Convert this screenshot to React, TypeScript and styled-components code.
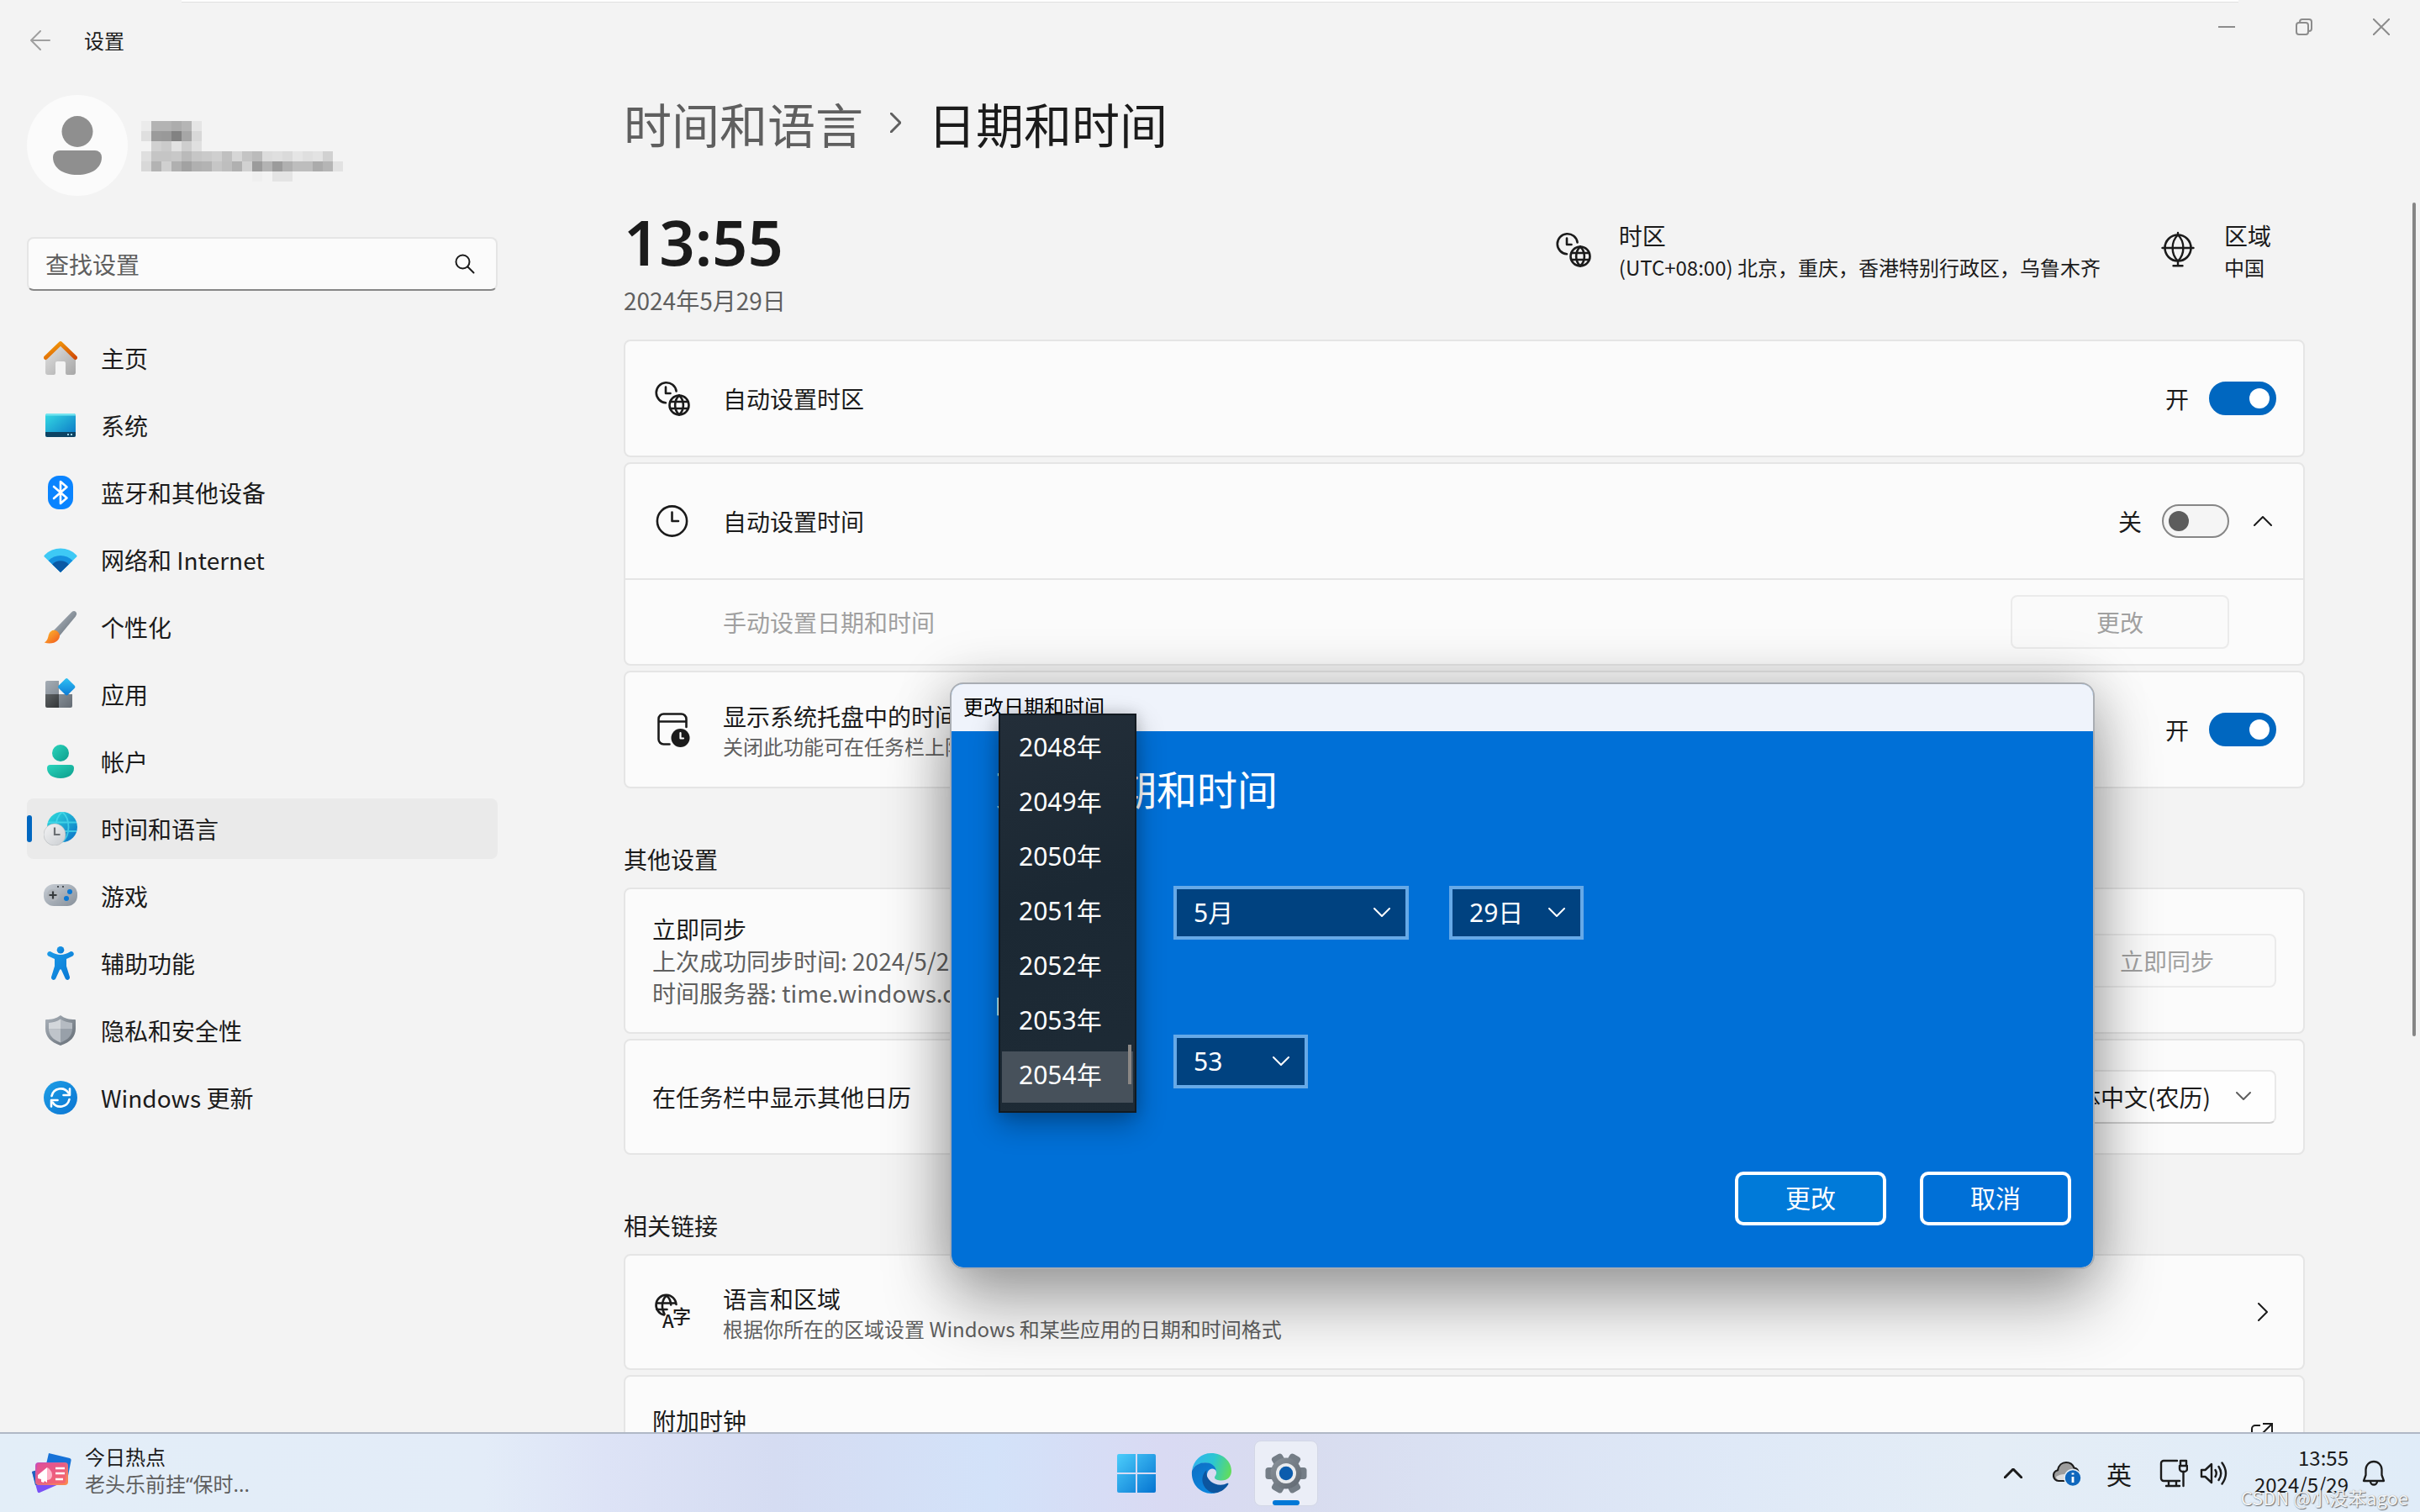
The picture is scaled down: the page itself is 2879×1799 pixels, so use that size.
import React from 'react';
import styled, { createGlobalStyle, css } from 'styled-components';

const GlobalStyle = createGlobalStyle`
  *, *::before, *::after { box-sizing: border-box; }
  body {
    margin: 0;
    background: #f3f3f3;
    color: #1b1b1b;
    font-family: "Noto Sans CJK SC", "Noto Sans", sans-serif;
    font-size: 28px;
    line-height: 40px;
  }
  h1, h2, h3, p, ul { margin: 0; padding: 0; font-weight: 400; }
  ul { list-style: none; }
  button, input, select { font: inherit; color: inherit; }
  a { color: inherit; text-decoration: none; }
  svg { display: block; flex: none; }
`;

/* ---------- shell ---------- */

const Desktop = styled.div`
  position: relative;
  height: 100vh;
  display: flex;
  flex-direction: column;
  overflow: hidden;
`;

const SettingsWindow = styled.div`
  flex: 1;
  min-height: 0;
  display: flex;
  flex-direction: column;
`;

const BackWindowEdge = styled.div`
  position: absolute;
  top: 0;
  left: 216px;
  right: 216px;
  height: 3px;
  background: #ffffff;
  border-bottom: 1px solid #e0e0e0;
`;

const TitleBar = styled.header`
  height: 96px;
  flex: none;
  display: flex;
  align-items: center;
  padding-left: 36px;
`;

const BackButton = styled.button`
  border: 0;
  padding: 0;
  background: none;
  color: #a0a0a0;
  margin-right: 40px;
`;

const WindowTitle = styled.span`
  font-size: 24px;
  line-height: 32px;
`;

const WindowControls = styled.div`
  margin-left: auto;
  align-self: flex-start;
  display: flex;
`;

const WindowControl = styled.button`
  width: 92px;
  height: 64px;
  border: 0;
  padding: 0;
  background: none;
  color: #8c8c8c;
  display: grid;
  place-items: center;
`;

const Body = styled.div`
  flex: 1;
  min-height: 0;
  display: flex;
`;

/* ---------- sidebar ---------- */

const Sidebar = styled.aside`
  width: 592px;
  flex: none;
  padding: 17px 0 0 32px;
`;

const Profile = styled.div`
  display: flex;
  gap: 16px;
  height: 120px;
`;

const Avatar = styled.div`
  width: 120px;
  height: 120px;
  border-radius: 50%;
  background: #fbfbfb;
  display: grid;
  place-items: center;
`;

const MaskedName = styled.svg`
  margin-top: 31px;
`;

const SearchBox = styled.label`
  margin-top: 49px;
  height: 64px;
  display: flex;
  align-items: center;
  padding: 0 25px 0 20px;
  background: #fbfbfb;
  border: 2px solid #e5e5e5;
  border-bottom-color: #868686;
  border-radius: 8px;
`;

const SearchInput = styled.input`
  flex: 1;
  min-width: 0;
  border: 0;
  padding: 0;
  outline: 0;
  background: none;
  height: 56px;
  &::placeholder { color: #5f5f5f; opacity: 1; }
`;

const NavList = styled.ul`
  margin-top: 44px;
  display: flex;
  flex-direction: column;
  gap: 8px;
`;

const NavLink = styled.a<{ $active?: boolean }>`
  position: relative;
  height: 72px;
  display: flex;
  align-items: center;
  gap: 28px;
  padding-left: 20px;
  border-radius: 8px;
  background: ${p => (p.$active ? '#eaeaea' : 'transparent')};
  ${p => p.$active && css`
    &::before {
      content: "";
      position: absolute;
      left: 0;
      top: 20px;
      width: 6px;
      height: 32px;
      border-radius: 3px;
      background: #0067c0;
    }
  `}
`;

/* ---------- main column ---------- */

const Main = styled.main`
  position: relative;
  flex: 1;
  min-width: 0;
  overflow: hidden;
  padding: 14px 137px 0 150px;
`;

const ScrollThumb = styled.div`
  position: absolute;
  right: 5px;
  top: 145px;
  width: 4px;
  height: 992px;
  border-radius: 2px;
  background: #868686;
`;

const Breadcrumb = styled.nav`
  display: flex;
  align-items: center;
  gap: 32px;
  font-size: 57px;
  line-height: 72px;
  color: #5f5f5f;
`;

const PageTitle = styled.h1`
  font-size: 57px;
  color: #1b1b1b;
`;

const Summary = styled.section`
  display: flex;
  align-items: flex-start;
  padding-right: 40px;
  margin: 58px 0 26px;
`;

const ClockFace = styled.div`
  flex: 1;
`;

const BigTime = styled.p`
  font-family: "Noto Sans", sans-serif;
  font-size: 74px;
  font-weight: 600;
  line-height: 96px;
`;

const Today = styled.p`
  color: #5f5f5f;
  line-height: 42px;
`;

const Fact = styled.div`
  display: flex;
  align-items: center;
  gap: 32px;
  margin: 20px 0 0 71px;
`;

const Small = styled.p<{ $muted?: boolean }>`
  font-size: 24px;
  line-height: 32px;
  color: ${p => (p.$muted ? '#5f5f5f' : 'inherit')};
`;

const FactText = styled.div`
  display: flex;
  flex-direction: column;
  gap: 2px;
`;

const Stack = styled.div`
  display: flex;
  flex-direction: column;
  gap: 6px;
`;

const Card = styled.section`
  background: #fbfbfb;
  border: 2px solid #e5e5e5;
  border-radius: 8px;
`;

const CardRow = styled.div<{ $h?: number; $indent?: boolean; $divided?: boolean; $endPad?: number }>`
  min-height: ${p => p.$h ?? 136}px;
  display: flex;
  align-items: center;
  padding: 0 ${p => p.$endPad ?? 32}px 0 ${p => (p.$indent ? 116 : 32)}px;
  border-top: ${p => (p.$divided ? '2px solid #e5e5e5' : '0')};
`;

const RowIcon = styled.span`
  width: 48px;
  margin: 0 36px 0 0;
  padding-left: 2px;
`;

const RowText = styled.div<{ $disabled?: boolean; $tight?: boolean }>`
  flex: 1;
  color: ${p => (p.$disabled ? '#a0a0a0' : 'inherit')};
  line-height: ${p => (p.$tight ? 38 : 40)}px;
`;

const RaisedRowText = styled(RowText)`
  padding-bottom: 32px;
`;

const Muted = styled.p`
  color: #5f5f5f;
`;

const SectionTitle = styled.h2`
  font-size: 28px;
  margin: 64px 0 14px;
`;

const ToggleLabel = styled.label`
  display: flex;
  align-items: center;
  gap: 24px;
`;

const ToggleInput = styled.input`
  appearance: none;
  margin: 0;
  width: 80px;
  height: 40px;
  border: 2px solid #868686;
  border-radius: 20px;
  background: #f5f5f5;
  display: flex;
  align-items: center;
  padding: 0 6px;
  &::before {
    content: "";
    width: 24px;
    height: 24px;
    border-radius: 50%;
    background: #5d5d5d;
  }
  &:checked {
    background: #0067c0;
    border-color: #0067c0;
    justify-content: flex-end;
  }
  &:checked::before { background: #ffffff; }
`;

const ExpandButton = styled.button`
  border: 0;
  padding: 0;
  background: none;
  margin-left: 29px;
`;

const QuietButton = styled.button`
  min-width: 260px;
  height: 64px;
  border: 2px solid #ebebeb;
  border-radius: 8px;
  background: #fafafa;
  &:disabled { color: #a0a0a0; }
`;

const Picker = styled.div`
  position: relative;
  display: flex;
  svg { position: absolute; right: 30px; top: 50%; margin-top: -6px; pointer-events: none; }
`;

const LightSelect = styled.select`
  appearance: none;
  height: 64px;
  padding: 0 76px 0 22px;
  border: 2px solid #e9e9e9;
  border-bottom-color: #d0d0d0;
  border-radius: 8px;
  background: #fefefe;
`;

/* ---------- dialog ---------- */

const Dialog = styled.div`
  position: absolute;
  left: 1130px;
  top: 812px;
  width: 1362px;
  height: 698px;
  display: flex;
  flex-direction: column;
  border: 2px solid #a9adb3;
  border-radius: 16px;
  background: #0070d7;
  background-clip: padding-box;
  color: #ffffff;
  font-family: "Noto Sans", "Noto Sans CJK SC", sans-serif;
  font-size: 30px;
  box-shadow: 0 44px 80px rgba(0, 0, 0, 0.3), 0 0 64px rgba(0, 0, 0, 0.22);
`;

const DialogBar = styled.div`
  height: 56px;
  flex: none;
  padding: 11px 14px;
  border-radius: 14px 14px 0 0;
  background: #eff3fb;
  color: #000000;
  font-size: 24px;
  line-height: 32px;
`;

const DialogBody = styled.div`
  flex: 1;
  display: flex;
  flex-direction: column;
  padding: 38px 26px 50px 52px;
`;

const DialogTitle = styled.h2`
  font-size: 48px;
  line-height: 64px;
`;

const FieldRow = styled.div<{ $gapTop: number }>`
  display: flex;
  gap: 48px;
  padding-left: 4px;
  margin-top: ${p => p.$gapTop}px;
`;

const FieldLabel = styled.h3`
  margin-top: 60px;
  font-size: 28px;
  line-height: 40px;
`;

const BluePicker = styled(Picker)`
  svg { right: 22px; }
`;

const BlueSelect = styled.select<{ $wide?: boolean }>`
  appearance: none;
  width: ${p => (p.$wide ? 280 : 160)}px;
  height: 64px;
  padding: 0 0 0 20px;
  border: 4px solid #66a9e7;
  border-radius: 0;
  background: #004280;
`;

const DialogActions = styled.div`
  margin-top: auto;
  display: flex;
  justify-content: flex-end;
  gap: 40px;
`;

const DialogButton = styled.button<{ $primary?: boolean }>`
  width: 180px;
  height: 64px;
  padding: 0;
  border: 4px solid #ffffff;
  border-radius: 10px;
  background: ${p => (p.$primary ? '#007ad9' : '#0070d7')};
`;

const YearMenu = styled.ul`
  position: absolute;
  left: 56px;
  top: 35px;
  width: 164px;
  padding: 10px 2px;
  display: flex;
  flex-direction: column;
  gap: 4px;
  border: 2px solid #121a21;
  background: linear-gradient(160deg, #232e39, #1b2833 45%, #1e2b36);
  box-shadow: 0 14px 32px rgba(0, 0, 0, 0.3), 0 0 16px rgba(0, 0, 0, 0.16);
`;

const YearOption = styled.li<{ $selected?: boolean }>`
  height: 61px;
  padding: 8px 0 13px 20px;
  line-height: 40px;
  background: ${p => (p.$selected ? '#47515b' : 'transparent')};
`;

const MenuThumb = styled.div`
  position: absolute;
  left: 210px;
  top: 429px;
  width: 4px;
  height: 47px;
  background: #8b8784;
`;

/* ---------- taskbar ---------- */

const Taskbar = styled.footer`
  position: relative;
  height: 95px;
  flex: none;
  display: flex;
  align-items: center;
  border-top: 2px solid #b0b8c6;
  background: linear-gradient(90deg, #e3eef8 0%, #e3ecf8 20%, #dde3f6 25%, #d5dcf2 32%, #d3e2f9 41%, #d9daf3 48%,
    #d8dcef 54%, #dbe3f4 62%, #dfe9f7 72%, #e4edf6 82%, #e0ecf8 100%);
`;

const Widget = styled.button`
  flex: 1 1 0;
  min-width: 0;
  border: 0;
  background: none;
  padding: 0 0 0 38px;
  display: flex;
  align-items: center;
  gap: 16px;
  text-align: left;
  font-family: "Noto Sans", "Noto Sans CJK SC", sans-serif;
`;

const WidgetText = styled.div`
  padding-bottom: 6px;
`;

const Apps = styled.div`
  display: flex;
  align-items: center;
  gap: 13px;
  padding-left: 5px;
`;

const AppButton = styled.button<{ $open?: boolean }>`
  position: relative;
  width: 76px;
  height: 78px;
  border: ${p => (p.$open ? '1px solid #d3d7e6' : '0')};
  border-radius: 8px;
  padding: 0;
  background: ${p => (p.$open ? '#ebeef7' : 'none')};
  display: grid;
  place-items: center;
  ${p => p.$open && css`
    &::after {
      content: "";
      position: absolute;
      bottom: 0;
      left: 21px;
      width: 32px;
      height: 6px;
      border-radius: 3px;
      background: #0078d7;
    }
  `}
`;

const Tray = styled.div`
  flex: 1 1 0;
  display: flex;
  align-items: center;
  justify-content: flex-end;
  padding-right: 41px;
`;

const TrayButton = styled.button<{ $gap: number }>`
  border: 0;
  padding: 0;
  background: none;
  font-size: 30px;
  margin-left: ${p => p.$gap}px;
`;

const TrayClock = styled.div`
  margin: 0 16px 0 31px;
  padding-bottom: 6px;
  font-size: 24px;
  line-height: 32px;
  text-align: right;
`;

const Watermark = styled.span`
  position: absolute;
  right: 14px;
  bottom: 4px;
  font-size: 22px;
  line-height: 28px;
  color: #f2f4f6;
  text-shadow: 1px 1px 1px #6e7276, 0 0 1px #9a9ea2;
`;

/* ---------- drawings ---------- */

const Gradient = ({ id, from, to }: { id: string; from: string; to: string }) => (
  <linearGradient id={id} x1="0" y1="0" x2="1" y2="1">
    <stop offset="0" stopColor={from} />
    <stop offset="1" stopColor={to} />
  </linearGradient>
);

const NavIcon = ({ children }: { children: React.ReactNode }) => (
  <svg width="40" height="40" viewBox="0 0 40 40" aria-hidden="true">{children}</svg>
);

const HomeIcon = () => (
  <NavIcon>
    <defs>
      <Gradient id="home-wall" from="#e4e4e4" to="#a6a6a6" />
      <Gradient id="home-roof" from="#f7a30b" to="#d04a05" />
    </defs>
    <path d="M20 4 38 22v15a3 3 0 0 1-3 3h-7a2 2 0 0 1-2-2V26a2 2 0 0 0-2-2h-8a2 2 0 0 0-2 2v12a2 2 0 0 1-2 2H5a3 3 0 0 1-3-3V22z" fill="url(#home-wall)" />
    <path d="M2.400 19.600 20 2.600l17.600 17" fill="none" stroke="url(#home-roof)" strokeWidth="4.800" strokeLinecap="round" strokeLinejoin="round" />
  </NavIcon>
);

const SystemIcon = () => (
  <NavIcon>
    <defs><Gradient id="sys" from="#35dbe4" to="#0a74c4" /></defs>
    <rect x="2" y="6" width="36" height="28" rx="2.500" fill="url(#sys)" />
    <path d="M2 8.500A2.500 2.500 0 0 1 4.500 6h31A2.500 2.500 0 0 1 38 8.500z" fill="#74e4f0" />
    <path d="M2 28h36v3.500a2.500 2.500 0 0 1-2.500 2.500h-31A2.500 2.500 0 0 1 2 31.500z" fill="#0d4363" />
    <path d="M28 30h2v2h-2zM32 30h2v2h-2z" fill="#9bd4ea" />
  </NavIcon>
);

const BluetoothIcon = () => (
  <NavIcon>
    <rect x="5" width="30" height="40" rx="13" fill="#0a84ff" />
    <path d="m12 13 15.500 13.500L20 33V7l7.500 6.500L12 27" fill="none" stroke="#fff" strokeWidth="2.600" strokeLinejoin="round" strokeLinecap="round" />
  </NavIcon>
);

const NetworkIcon = () => (
  <NavIcon>
    <path d="M20 35 .8 16.400q-.8-1 .2-2a27 27 0 0 1 38 0q1 1 .2 2z" fill="#3ec9f5" />
    <path d="M20 35 5.600 21a20 20 0 0 1 28.800 0z" fill="#1590df" />
    <path d="M20 35 10.200 25.500a13.600 13.600 0 0 1 19.600 0z" fill="#0b59a5" />
  </NavIcon>
);

const BrushIcon = () => (
  <NavIcon>
    <defs>
      <Gradient id="brush-handle" from="#b8c0c8" to="#5c6670" />
      <Gradient id="brush-tip" from="#ffc02e" to="#f0561d" />
    </defs>
    <path d="M12 24 33 2.500q3-2.500 5.200-.6 2 2.200-.3 5.600L18.500 31z" fill="url(#brush-handle)" />
    <path d="M.8 38.500C5 36 4.800 33 6 29c1.400-4.500 5.500-6.400 9.200-4.600C19 26.500 20 30.500 18 34c-3 5.500-11 6.600-17.200 4.500z" fill="url(#brush-tip)" />
  </NavIcon>
);

const AppsIcon = () => (
  <NavIcon>
    <defs>
      <Gradient id="apps-a" from="#a5adb5" to="#868e97" />
      <Gradient id="apps-b" from="#5e6264" to="#333638" />
      <Gradient id="apps-c" from="#858d95" to="#646b73" />
      <Gradient id="apps-d" from="#2fc3f4" to="#0c78d4" />
    </defs>
    <path d="M2 6a2 2 0 0 1 2-2h14v16H2z" fill="url(#apps-a)" />
    <path d="M2 20h16v16H4a2 2 0 0 1-2-2z" fill="url(#apps-b)" />
    <path d="M18 20h16v14a2 2 0 0 1-2 2H18z" fill="url(#apps-c)" />
    <rect x="19.500" y="3.500" width="15.500" height="15.500" rx="2" transform="rotate(45 27.250 11.250)" fill="url(#apps-d)" />
  </NavIcon>
);

const AccountIcon = () => (
  <NavIcon>
    <defs><Gradient id="acct" from="#2ad5bd" to="#0c9d8b" /></defs>
    <circle cx="20" cy="10" r="10" fill="url(#acct)" />
    <path d="M4 28a4 4 0 0 1 4-4h24a4 4 0 0 1 4 4c0 7-6 12-16 12S4 35 4 28z" fill="url(#acct)" />
  </NavIcon>
);

const TimeIcon = () => (
  <NavIcon>
    <defs>
      <Gradient id="time-globe" from="#2fe0dc" to="#0a6dc7" />
      <Gradient id="time-clock" from="#f4f4f5" to="#c9cdd1" />
    </defs>
    <circle cx="22" cy="18" r="18" fill="url(#time-globe)" />
    <path d="M5 12.500h34M12 23h27M22 0c-10 8-10 28 0 36M22 0c10 8 10 28 0 36" fill="none" stroke="#4ee0f0" strokeOpacity=".7" strokeWidth="1.800" />
    <circle cx="13" cy="27" r="13" fill="url(#time-clock)" stroke="#b3b7bb" strokeWidth=".6" />
    <path d="M13 18.500V27h6.500" fill="none" stroke="#6b6f73" strokeWidth="2.200" />
  </NavIcon>
);

const GameIcon = () => (
  <NavIcon>
    <defs><Gradient id="game" from="#c8ced5" to="#87909a" /></defs>
    <rect y="6" width="40" height="26" rx="12" fill="url(#game)" />
    <circle cx="11" cy="19" r="7" fill="#b0b5bb" />
    <path d="M11 14.500v9M6.500 19h9" stroke="#363a3d" strokeWidth="2.200" />
    <path d="M16 8h2v2h-2zM22 8h2v2h-2z" fill="#4b5055" />
    <circle cx="31" cy="15" r="3" fill="#0a78d4" />
    <circle cx="27" cy="23" r="3" fill="#0a78d4" />
  </NavIcon>
);

const AccessIcon = () => (
  <NavIcon>
    <defs><Gradient id="access" from="#1d9be8" to="#0676d3" /></defs>
    <circle cx="20" cy="4.300" r="4.300" fill="url(#access)" />
    <path d="M5.500 6.600c1-.8 2.200-.6 3.200-.1 7.500 4.600 15.100 4.600 22.600 0 1-.5 2.200-.7 3.200.1 2 1.700 1.700 4-.5 5.200L27 15v8.500l4 13c.5 3-3.500 5-5.300 1.800L20.800 27.500h-1.600l-4.900 10.800C12.500 41.500 8.500 39.500 9 36.500l4-13V15l-7-3.200C3.800 10.600 3.500 8.300 5.500 6.600z" fill="url(#access)" />
  </NavIcon>
);

const ShieldIcon = () => (
  <NavIcon>
    <defs><Gradient id="shield" from="#aab2ba" to="#636b74" /></defs>
    <path d="M20 2c5 3.800 10.500 5 17 5q1 0 1 1v10c0 9-6 16-18 20C8 34 2 27 2 18V8q0-1 1-1c6.500 0 12-1.200 17-5z" fill="url(#shield)" />
    <path d="M20 6.500c-4.500 3-9 4.200-14 4.500v7.500h14z" fill="#d3d7db" />
    <path d="M20 6.500c4.500 3 9 4.200 14 4.500v7.500H20z" fill="#b5bbc2" />
    <path d="M6 18.500C6.500 26 11 31 20 34.500v-16z" fill="#bfc4ca" />
    <path d="M34 18.500C33.500 26 29 31 20 34.500v-16z" fill="#98a0a9" />
  </NavIcon>
);

const UpdateIcon = () => (
  <NavIcon>
    <defs><Gradient id="upd" from="#1f9fe6" to="#0a74d2" /></defs>
    <circle cx="20" cy="20" r="20" fill="url(#upd)" />
    <path d="M9.500 18a11 11 0 0 1 20-3.500M30.500 22a11 11 0 0 1-20 3.500" fill="none" stroke="#fff" strokeWidth="2.600" strokeLinecap="round" />
    <path d="M31 9.500V17h-7.500M9 30.500V23h7.500" fill="none" stroke="#fff" strokeWidth="2.600" strokeLinecap="round" strokeLinejoin="round" />
  </NavIcon>
);

const LineIcon = ({ children }: { children: React.ReactNode }) => (
  <svg width="44" height="44" viewBox="0 0 44 44" fill="none" stroke="#1b1b1b" strokeWidth="2.600" strokeLinecap="round" strokeLinejoin="round" aria-hidden="true">
    {children}
  </svg>
);

const TimeZoneIcon = () => (
  <LineIcon>
    <path d="M14 27.200A12 12 0 1 1 26.600 13.500" />
    <path d="M14 8.500v7.500h5.500" />
    <circle cx="30" cy="30" r="11.500" />
    <path d="M19.500 26h21M19.500 34h21M30 18.500c-6.500 6-6.500 17 0 23M30 18.500c6.500 6 6.500 17 0 23" />
  </LineIcon>
);

const ClockIcon = () => (
  <LineIcon>
    <circle cx="21.500" cy="22" r="17.600" />
    <path d="M21.500 11.500V22H29" />
  </LineIcon>
);

const CalendarIcon = () => (
  <LineIcon>
    <path d="M38.500 19v-9.500a6 6 0 0 0-6-6h-21a6 6 0 0 0-6 6v24a6 6 0 0 0 6 6h7M5.500 12.500h33" />
    <circle cx="31.500" cy="32" r="11" fill="#1b1b1b" stroke="none" />
    <path d="M31.500 26v6.500h3.500" stroke="#fff" strokeWidth="2.200" />
  </LineIcon>
);

const LanguageIcon = () => (
  <LineIcon>
    <path d="M12 25.500A12 12 0 1 1 26.500 13" />
    <path d="M3.500 11.500h22M3.500 19h12M15 2.500c-6 5-6.500 15-2.500 22M15 2.500c3.500 3 5 6.500 5.200 11" />
    <text x="10" y="41" fontSize="22" fontWeight="500" fill="#1b1b1b" stroke="none">A</text>
    <text x="22" y="35" fontSize="22" fontWeight="500" fill="#1b1b1b" stroke="none">字</text>
  </LineIcon>
);

const GlobeIcon = () => (
  <LineIcon>
    <circle cx="21" cy="20" r="15.500" />
    <path d="M2.500 20h37M21 2v2M21 4.500c-8.500 8-8.500 23 0 31M21 4.500c8.500 8 8.500 23 0 31M21 36v5M15.500 41.300h11" strokeWidth="2.400" />
  </LineIcon>
);

const Chevron = ({ dir, size = 20, weight = 2, color = '#1b1b1b' }: { dir: 'up' | 'down' | 'right'; size?: number; weight?: number; color?: string }) => {
  const half = size / 2;
  const upright = dir !== 'right';
  const points = {
    up: `1,${half + 1} ${half + 1},1 ${size + 1},${half + 1}`,
    down: `1,1 ${half + 1},${half + 1} ${size + 1},1`,
    right: `1,1 ${half + 1},${half + 1} 1,${size + 1}`,
  }[dir];
  return (
    <svg width={upright ? size + 2 : half + 2} height={upright ? half + 2 : size + 2} fill="none" stroke={color} strokeWidth={weight} strokeLinecap="round" strokeLinejoin="round" aria-hidden="true">
      <polyline points={points} />
    </svg>
  );
};

const MASK_ROWS = [
  'eb b3 b3 ac b5 e5',
  'df 9b 99 82 a6 d8',
  '-- d1 cb e2 ce e0',
  'df c5 c5 c8 ba c6 ca cf c0 d6 c4 bb dc df da e5 df e3 d1',
  'd8 b3 d0 b0 a2 b0 b3 c6 be b0 d1 9b b3 9b b0 bd bd ab b5 e2',
  '-- -- -- -- -- -- -- -- -- -- -- ef -- e4 e4',
].map(row => row.split(' '));

const EdgeLogo = () => (
  <svg width="48" height="48" viewBox="0 0 48 48" aria-hidden="true">
    <defs>
      <linearGradient id="edge-top" x1="0" y1=".4" x2="1" y2=".6">
        <stop offset="0" stopColor="#2fb4ee" />
        <stop offset=".5" stopColor="#2cc6d2" />
        <stop offset="1" stopColor="#62dd5b" />
      </linearGradient>
      <linearGradient id="edge-left" x1="0" y1="0" x2=".6" y2="1">
        <stop offset="0" stopColor="#0e6fc4" />
        <stop offset="1" stopColor="#0a86de" />
      </linearGradient>
    </defs>
    <path d="M1 21C3 8 12 0 24 0c14 0 24 10 24 21 0 7-5 11.500-11.500 11.500-5 0-8.500-1.500-8.500-3.500 0-1.500 2-2.500 2-6 0-6-5.500-11.500-13-11.500C9 11.500 4 15 1 21z" fill="url(#edge-top)" />
    <path d="M1 21c3-6.500 8.500-9.800 16-9.800 7.500 0 13 4.800 13 10.800-.5-2-2.500-3.500-5-3.500-4 0-7 5-6 11.500C20.500 39 29 44 37 42.500 33 46 29 48 24 48 10 48-.5 36 1 21z" fill="url(#edge-left)" />
    <path d="M18.500 20c-6 5-6.500 14-2.500 20 3.500 5.200 9 8 14 7.200 6-1.200 11-4.700 14.300-10.200.6-1-.4-1.700-1.300-1.200-4 2.200-9.500 2.700-14.500.7C21 33.500 17 27 18.500 20z" fill="#0c559f" />
  </svg>
);

const SettingsLogo = () => (
  <svg width="50" height="48" viewBox="-25 -24 50 48" aria-hidden="true">
    <defs><Gradient id="gear" from="#8b939b" to="#5f6770" /></defs>
    <g fill="#747d86">
      {[0, 60, 120].map(a => (
        <rect key={a} x="-24.500" y="-7" width="49" height="14" rx="3.500" transform={`rotate(${a})`} />
      ))}
      <circle r="18.500" fill="url(#gear)" />
    </g>
    <circle r="12" fill="#e9ebee" />
    <circle r="8.200" fill="#0b5cad" />
  </svg>
);

const NewsIcon = () => (
  <svg width="47" height="48" viewBox="0 0 47 48" aria-hidden="true">
    <defs><Gradient id="news" from="#c24bc0" to="#ff8a4a" /></defs>
    <path d="m0 22 30-6 4 20-25 11q-2 .6-2.500-1.500z" fill="#7a50f5" />
    <path d="m0 22 6-2 1 18-3 0z" fill="#1d63c0" />
    <path d="m20 0 25 6q2 .6 1.600 2.500L42 32 14 26z" fill="#1672d8" />
    <rect x="4" y="11" width="39" height="27" rx="4" fill="url(#news)" />
    <rect x="6" y="12" width="34" height="24" rx="3" fill="#f4517f" fillOpacity=".55" />
    <path d="m7 26 11-9v18l-3-2-1 2-3-1 0-3-4-1z" fill="#fff" />
    <path d="M18 17c4 2 6 6 6 9s-2 6-6 6z" fill="#ffb3c8" />
    <path d="M28 18h11M28 24h11M28 31h9" stroke="#fff" strokeWidth="2.400" />
  </svg>
);

const CloudIcon = () => (
  <svg width="34" height="32" viewBox="0 0 34 32" aria-hidden="true">
    <path d="M7 25a6.500 6.500 0 0 1-1-12.800C7 6.500 11 3 16 3c4.500 0 8 2.500 9.500 6.500 3 .5 5 3 5 6L18 25z" fill="#9d9d9d" stroke="#1b1b1b" strokeWidth="2.200" />
    <path d="M4 20c5-3 10-4 15-2l-2 6H8c-2 0-4-2-4-4z" fill="#dcdcdc" />
    <circle cx="24" cy="21.500" r="10" fill="#0f67bd" stroke="#e4eef7" strokeWidth="1.500" />
    <path d="M24 20v7M24 15.500v2" stroke="#fff" strokeWidth="2.800" />
  </svg>
);

/* ---------- content ---------- */

const NAV: { label: string; icon: React.ReactNode; active?: boolean }[] = [
  { label: '主页', icon: <HomeIcon /> },
  { label: '系统', icon: <SystemIcon /> },
  { label: '蓝牙和其他设备', icon: <BluetoothIcon /> },
  { label: '网络和 Internet', icon: <NetworkIcon /> },
  { label: '个性化', icon: <BrushIcon /> },
  { label: '应用', icon: <AppsIcon /> },
  { label: '帐户', icon: <AccountIcon /> },
  { label: '时间和语言', icon: <TimeIcon />, active: true },
  { label: '游戏', icon: <GameIcon /> },
  { label: '辅助功能', icon: <AccessIcon /> },
  { label: '隐私和安全性', icon: <ShieldIcon /> },
  { label: 'Windows 更新', icon: <UpdateIcon /> },
];

const YEARS = [2048, 2049, 2050, 2051, 2052, 2053, 2054];

const Toggle = ({ on, name }: { on?: boolean; name: string }) => (
  <ToggleLabel>
    {on ? '开' : '关'}
    <ToggleInput type="checkbox" role="switch" aria-label={name} defaultChecked={on} />
  </ToggleLabel>
);

const BlueDropdown = ({ name, value, wide }: { name: string; value: string; wide?: boolean }) => (
  <BluePicker>
    <BlueSelect aria-label={name} $wide={wide} defaultValue={value}>
      <option>{value}</option>
    </BlueSelect>
    <Chevron dir="down" size={18} color="#ffffff" />
  </BluePicker>
);

const SettingsSidebar = () => (
  <Sidebar>
    <Profile>
      <Avatar>
        <svg width="58" height="70" viewBox="0 0 58 70" fill="#8f8f8f" aria-hidden="true">
          <circle cx="29" cy="18.500" r="18.500" />
          <path d="M0 49a8 8 0 0 1 8-8h42a8 8 0 0 1 8 8c0 13-12 21-29 21S0 62 0 49z" />
        </svg>
      </Avatar>
      <MaskedName width="240" height="72" shapeRendering="crispEdges" aria-hidden="true">
        {MASK_ROWS.map((row, y) => row.map((v, x) => v !== '--' && (
          <rect key={`${x}-${y}`} x={x * 12} y={y * 12} width="12" height="12" fill={`#${v}${v}${v}`} />
        )))}
      </MaskedName>
    </Profile>
    <SearchBox>
      <SearchInput type="text" placeholder="查找设置" aria-label="查找设置" />
      <svg width="24" height="24" viewBox="0 0 24 24" fill="none" stroke="#1b1b1b" strokeWidth="2" strokeLinecap="round" aria-hidden="true">
        <circle cx="9.500" cy="9.500" r="8" />
        <path d="m15.500 15.500 7 7" />
      </svg>
    </SearchBox>
    <nav>
      <NavList>
        {NAV.map(item => (
          <li key={item.label}>
            <NavLink href="#" $active={item.active}>{item.icon}{item.label}</NavLink>
          </li>
        ))}
      </NavList>
    </nav>
  </Sidebar>
);

const DateTimePage = () => (
  <Main>
    <Breadcrumb>
      <a href="#">时间和语言</a>
      <Chevron dir="right" size={22} weight={3} color="#5f5f5f" />
      <PageTitle>日期和时间</PageTitle>
    </Breadcrumb>

    <Summary>
      <ClockFace>
        <BigTime>13:55</BigTime>
        <Today>2024年5月29日</Today>
      </ClockFace>
      <Fact>
        <TimeZoneIcon />
        <FactText>
          <p>时区</p>
          <Small>(UTC+08:00) 北京，重庆，香港特别行政区，乌鲁木齐</Small>
        </FactText>
      </Fact>
      <Fact>
        <GlobeIcon />
        <FactText>
          <p>区域</p>
          <Small>中国</Small>
        </FactText>
      </Fact>
    </Summary>

    <Stack>
      <Card>
        <CardRow>
          <RowIcon><TimeZoneIcon /></RowIcon>
          <RowText>自动设置时区</RowText>
          <Toggle on name="自动设置时区" />
        </CardRow>
      </Card>
      <Card>
        <CardRow $endPad={37}>
          <RowIcon><ClockIcon /></RowIcon>
          <RowText>自动设置时间</RowText>
          <Toggle name="自动设置时间" />
          <ExpandButton aria-label="折叠"><Chevron dir="up" size={20} /></ExpandButton>
        </CardRow>
        <CardRow $h={102} $indent $divided $endPad={88}>
          <RowText $disabled>手动设置日期和时间</RowText>
          <QuietButton disabled>更改</QuietButton>
        </CardRow>
      </Card>
      <Card>
        <CardRow>
          <RowIcon><CalendarIcon /></RowIcon>
          <RowText>
            <p>显示系统托盘中的时间和日期</p>
            <Small $muted>关闭此功能可在任务栏上隐藏时间和日期信息</Small>
          </RowText>
          <Toggle on name="显示系统托盘中的时间和日期" />
        </CardRow>
      </Card>
    </Stack>

    <SectionTitle>其他设置</SectionTitle>
    <Stack>
      <Card>
        <CardRow $h={170}>
          <RowText $tight>
            <p>立即同步</p>
            <Muted>上次成功同步时间: 2024/5/29 13:53:05</Muted>
            <Muted>时间服务器: time.windows.com</Muted>
          </RowText>
          <QuietButton disabled>立即同步</QuietButton>
        </CardRow>
      </Card>
      <Card>
        <CardRow $h={134}>
          <RowText>在任务栏中显示其他日历</RowText>
          <Picker>
            <LightSelect aria-label="在任务栏中显示其他日历" defaultValue="简体中文(农历)">
              <option>简体中文(农历)</option>
            </LightSelect>
            <Chevron dir="down" size={16} color="#5f5f5f" />
          </Picker>
        </CardRow>
      </Card>
    </Stack>

    <SectionTitle>相关链接</SectionTitle>
    <Stack>
      <Card>
        <CardRow $h={134} $endPad={42}>
          <RowIcon><LanguageIcon /></RowIcon>
          <RowText>
            <p>语言和区域</p>
            <Small $muted>根据你所在的区域设置 Windows 和某些应用的日期和时间格式</Small>
          </RowText>
          <Chevron dir="right" size={20} />
        </CardRow>
      </Card>
      <Card>
        <CardRow $endPad={36}>
          <RaisedRowText>附加时钟</RaisedRowText>
          <svg width="26" height="26" viewBox="0 0 26 26" fill="none" stroke="#1b1b1b" strokeWidth="2" aria-hidden="true">
            <path d="M11 3H5a4 4 0 0 0-4 4v14a4 4 0 0 0 4 4h14a4 4 0 0 0 4-4v-6M14 1h11v11M25 1 13 13" />
          </svg>
        </CardRow>
      </Card>
    </Stack>
    <ScrollThumb />
  </Main>
);

const ChangeDialog = () => (
  <Dialog role="dialog" aria-label="更改日期和时间">
    <DialogBar>更改日期和时间</DialogBar>
    <DialogBody>
      <DialogTitle>更改日期和时间</DialogTitle>
      <FieldRow $gapTop={82}>
        <BlueDropdown name="年" value="2054年" />
        <BlueDropdown name="月" value="5月" wide />
        <BlueDropdown name="日" value="29日" />
      </FieldRow>
      <FieldLabel>时间</FieldLabel>
      <FieldRow $gapTop={13}>
        <BlueDropdown name="时" value="13" />
        <BlueDropdown name="分" value="53" />
      </FieldRow>
      <DialogActions>
        <DialogButton $primary>更改</DialogButton>
        <DialogButton>取消</DialogButton>
      </DialogActions>
    </DialogBody>
    <YearMenu role="listbox" aria-label="年">
      {YEARS.map(year => (
        <YearOption key={year} role="option" aria-selected={year === 2054} $selected={year === 2054}>{year}年</YearOption>
      ))}
    </YearMenu>
    <MenuThumb />
  </Dialog>
);

const SystemTaskbar = () => (
  <Taskbar>
    <Widget>
      <NewsIcon />
      <WidgetText>
        <Small>今日热点</Small>
        <Small $muted>老头乐前挂“保时...</Small>
      </WidgetText>
    </Widget>
    <Apps>
      <AppButton aria-label="开始">
        <svg width="46" height="46" viewBox="0 0 46 46" aria-hidden="true">
          <defs>
            <linearGradient id="start" gradientUnits="userSpaceOnUse" x1="0" y1="0" x2="46" y2="46">
              <stop offset="0" stopColor="#4ccdfb" />
              <stop offset="1" stopColor="#0574d1" />
            </linearGradient>
          </defs>
          <path d="M2 0h20v22H0V2a2 2 0 0 1 2-2zM24 0h20a2 2 0 0 1 2 2v20H24zM0 24h22v22H2a2 2 0 0 1-2-2zM24 24h22v20a2 2 0 0 1-2 2H24z" fill="url(#start)" />
        </svg>
      </AppButton>
      <AppButton aria-label="Microsoft Edge"><EdgeLogo /></AppButton>
      <AppButton aria-label="设置" $open><SettingsLogo /></AppButton>
    </Apps>
    <Tray>
      <TrayButton $gap={0} aria-label="隐藏的图标"><Chevron dir="up" size={20} weight={3} /></TrayButton>
      <TrayButton $gap={36} aria-label="OneDrive"><CloudIcon /></TrayButton>
      <TrayButton $gap={30}>英</TrayButton>
      <TrayButton $gap={33} aria-label="网络">
        <svg width="34" height="34" viewBox="0 0 34 34" fill="none" stroke="#1b1b1b" strokeWidth="2.400" strokeLinejoin="round" strokeLinecap="round" aria-hidden="true">
          <path d="M21 2H5a3 3 0 0 0-3 3v18a3 3 0 0 0 3 3h19M11 26v6M20 26v6M8 32h16M28.500 15v17" />
          <path d="M24 8h9v3.500a3.500 3.500 0 0 1-3.500 3.500h-2a3.500 3.500 0 0 1-3.500-3.500zM25 2h7v6h-7z" />
        </svg>
      </TrayButton>
      <TrayButton $gap={14} aria-label="音量">
        <svg width="34" height="30" viewBox="0 0 34 30" fill="none" stroke="#1b1b1b" strokeWidth="2.400" strokeLinejoin="round" strokeLinecap="round" aria-hidden="true">
          <path d="M2 11h4.500L14 4v22l-7.500-7H2zM18.500 11q2.500 4 0 8M22.500 7q5.500 8 0 16M26.500 2.500q9 12.500 0 25" />
        </svg>
      </TrayButton>
      <TrayClock>
        <div>13:55</div>
        <div>2024/5/29</div>
      </TrayClock>
      <TrayButton $gap={0} aria-label="通知">
        <svg width="28" height="32" viewBox="0 0 28 32" fill="none" stroke="#1b1b1b" strokeWidth="2.300" strokeLinejoin="round" strokeLinecap="round" aria-hidden="true">
          <path d="M14 2a9.500 9.500 0 0 0-9.500 9.500V18L2 25h24l-2.500-7v-6.500A9.500 9.500 0 0 0 14 2zM10 25.500a4 4 0 0 0 8 0" />
        </svg>
      </TrayButton>
    </Tray>
    <Watermark>CSDN @小没苯agoe</Watermark>
  </Taskbar>
);

export default function App() {
  return (
    <>
      <GlobalStyle />
      <Desktop>
        <SettingsWindow>
          <BackWindowEdge />
          <TitleBar>
            <BackButton aria-label="返回">
              <svg width="24" height="24" viewBox="0 0 24 24" fill="none" stroke="currentColor" strokeWidth="2" strokeLinecap="round" strokeLinejoin="round" aria-hidden="true">
                <path d="M23 12H1M12 1 1 12l11 11" />
              </svg>
            </BackButton>
            <WindowTitle>设置</WindowTitle>
            <WindowControls>
              <WindowControl aria-label="最小化">
                <svg width="20" height="20" stroke="currentColor" strokeWidth="2" aria-hidden="true"><path d="M0 10h20" /></svg>
              </WindowControl>
              <WindowControl aria-label="还原">
                <svg width="20" height="20" fill="none" stroke="currentColor" strokeWidth="2" aria-hidden="true">
                  <rect x="1" y="5" width="14" height="14" rx="3" />
                  <path d="M5 5V4a3 3 0 0 1 3-3h8a3 3 0 0 1 3 3v8a3 3 0 0 1-3 3h-1" />
                </svg>
              </WindowControl>
              <WindowControl aria-label="关闭">
                <svg width="20" height="20" stroke="currentColor" strokeWidth="2" aria-hidden="true"><path d="m0 0 20 20M20 0 0 20" /></svg>
              </WindowControl>
            </WindowControls>
          </TitleBar>
          <Body>
            <SettingsSidebar />
            <DateTimePage />
          </Body>
        </SettingsWindow>
        <SystemTaskbar />
        <ChangeDialog />
      </Desktop>
    </>
  );
}
